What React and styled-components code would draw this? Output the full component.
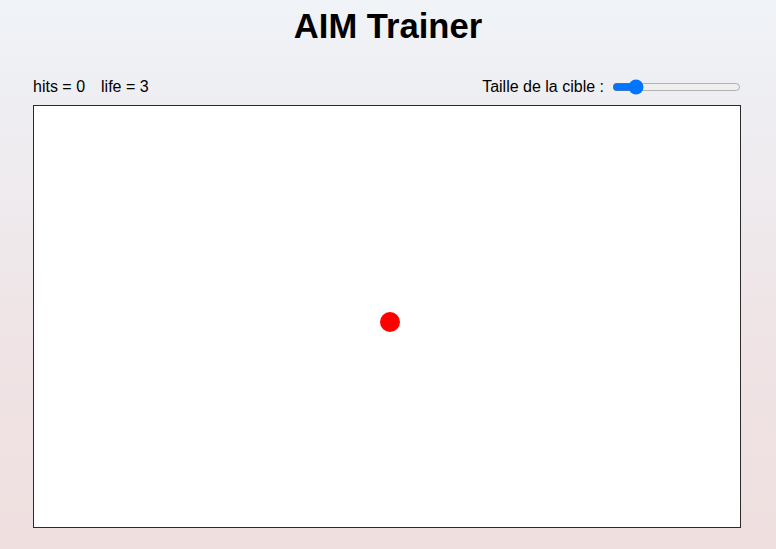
import React, { useState } from "react";
import styled, { createGlobalStyle } from "styled-components";

const Global = createGlobalStyle`
  html, body { margin: 0; padding: 0; min-height: 100%; }
  body {
    min-height: 549px;
    font-family: "Liberation Sans", Arial, sans-serif;
    background: linear-gradient(180deg, #f0f3f7 0%, #eeeef2 20%, #efe4e6 60%, #efdfdf 100%);
    color: #000;
  }
`;

const Page = styled.div`
  display: flex;
  flex-direction: column;
  padding: 7px 35px 0 33px;
`;

const Title = styled.h1`
  margin: 0;
  font-size: 34.6px;
  line-height: 39px;
  font-weight: bold;
  text-align: center;
  padding-left: 2px;
`;

const Bar = styled.div`
  display: flex;
  justify-content: space-between;
  align-items: center;
  height: 20px;
  margin-top: 31px;
  font-size: 16px;
`;

const Stats = styled.div`
  display: flex;
  gap: 16px;
`;

const SizeControl = styled.label`
  display: flex;
  align-items: center;
  gap: 6px;
`;

const Slider = styled.input`
  width: 129px;
  margin: 2px 0 2px 2px;
  accent-color: #0075ff;
`;

const Arena = styled.div`
  position: relative;
  margin-top: 8px;
  width: 706px;
  height: 421px;
  border: 1px solid #2b2b2b;
  background: #fff;
`;

const Target = styled.div`
  position: absolute;
  width: 20px;
  height: 20px;
  border-radius: 50%;
  background: #ff0000;
`;

export default function App() {
  const [size, setSize] = useState(14);
  return (
    <>
      <Global />
      <Page>
        <Title>AIM Trainer</Title>
        <Bar>
          <Stats>
            <span>hits = 0</span>
            <span>life = 3</span>
          </Stats>
          <SizeControl>
            Taille de la cible :
            <Slider
              type="range"
              min="0"
              max="100"
              value={size}
              onChange={(e) => setSize(Number(e.target.value))}
            />
          </SizeControl>
        </Bar>
        <Arena>
          <Target style={{ left: 346, top: 206 }} />
        </Arena>
      </Page>
    </>
  );
}
